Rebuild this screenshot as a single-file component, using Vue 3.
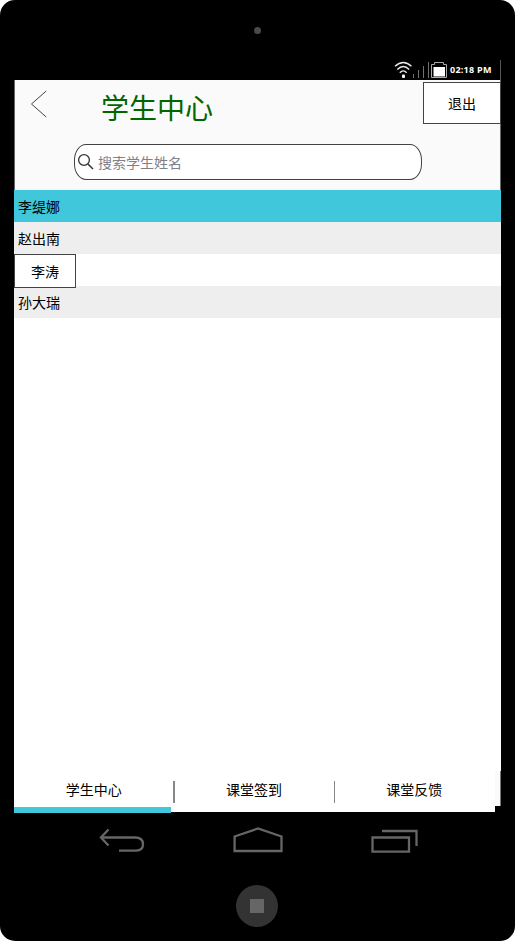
<script setup>
import { ref } from 'vue'

const students = [
  { name: '李缇娜', kind: 'active' },
  { name: '赵出南', kind: 'shaded' },
  { name: '李涛', kind: 'boxed' },
  { name: '孙大瑞', kind: 'shaded' },
]
const tabs = ['学生中心', '课堂签到', '课堂反馈']
const current = ref(0)
const keyword = ref('')
</script>

<template>
  <div class="phone">
    <div class="speaker"><span class="camera"></span></div>
    <div class="status">
      <svg class="signals" width="56" height="20" viewBox="0 0 56 20">
        <g fill="none" stroke="#e8e8e8" stroke-width="1.400">
          <path d="M1 6.300Q9.200 -1.500 17.500 6.300" />
          <path d="M3.300 9.600Q9.200 3.500 15.200 9.600" />
          <path d="M5.800 12.700Q9.200 9 12.700 12.700" />
        </g>
        <rect x="8" y="14.500" width="3" height="3.500" rx="1" fill="#fff" />
        <path d="M19.500 14v4M24.500 10v8M29.500 6v12M34.500 2v16" stroke="#707070" fill="none" />
        <path d="M37.500 17.500V4.500H40.500V2.500H49.500V4.500H52.500V17.500Z" stroke="#aaa" fill="#000" />
        <rect x="39.500" y="7" width="11.500" height="9.500" fill="#fff" />
      </svg>
      <span class="time">02:18 PM</span>
    </div>
    <main class="screen">
      <header class="header">
        <div class="title-row">
          <svg class="back" width="18" height="28" viewBox="0 0 18 28">
            <path d="M16.200 1L1.500 14L16.200 27" fill="none" stroke="#444" />
          </svg>
          <h1>学生中心</h1>
          <button class="exit">退出</button>
        </div>
        <label class="search">
          <svg width="18" height="18" viewBox="0 0 18 18" fill="none" stroke="#333" stroke-width="1.300">
            <circle cx="7" cy="7" r="5.400" />
            <path d="M11 11L16 16" stroke-width="1.500" />
          </svg>
          <input v-model="keyword" placeholder="搜索学生姓名" />
        </label>
      </header>
      <ul class="list">
        <li v-for="s in students" :key="s.name" :class="s.kind">
          <span>{{ s.name }}</span>
        </li>
      </ul>
      <footer class="footer">
        <nav class="tabs">
          <div v-for="(t, i) in tabs" :key="t" class="tab" :class="{ on: i === current }" @click="current = i">{{ t }}</div>
        </nav>
        <span class="edge"></span>
      </footer>
    </main>
    <div class="keys">
      <svg width="46" height="26" viewBox="0 0 46 26" fill="none" stroke="#666">
        <path d="M2 9.500H36Q44 9.500 44 16.200Q44 22.700 36 22.700H20" stroke-width="2.300" />
        <path d="M9.500 1.500L2 9.500L9.500 17.500" stroke-width="2.300" />
      </svg>
      <svg width="50" height="28" viewBox="0 0 50 28" fill="none" stroke="#666" stroke-width="2.300">
        <path d="M1.600 10.500L25 2.500L48.500 10.500V25H1.600Z" />
      </svg>
      <svg width="47" height="26" viewBox="0 0 47 26" fill="none" stroke="#666" stroke-width="2.300">
        <path d="M1.500 9.500H38V23.700H1.500ZM11 3H45.500V18" />
      </svg>
    </div>
    <div class="bottom"><span class="home"><i></i></span></div>
  </div>
</template>

<style>
body {
  margin: 0;
  background: #fff;
}
</style>

<style scoped>
.phone {
  box-sizing: border-box;
  width: 515px;
  height: 941px;
  padding: 0 14px;
  border-radius: 15px;
  background: #000;
  color: #000;
  font: 14px/20px "Noto Sans CJK SC", sans-serif;
  display: flex;
  flex-direction: column;
}
.speaker {
  height: 60px;
  display: flex;
  justify-content: center;
  align-items: center;
}
.camera {
  width: 7px;
  height: 7px;
  border-radius: 50%;
  background: #4a4a4a;
}
.status {
  box-sizing: border-box;
  height: 20px;
  width: 487px;
  padding-right: 7px;
  border-right: 1px solid #555;
  display: flex;
  justify-content: flex-end;
  align-items: center;
}
.time {
  color: #fff;
  font: bold 9px/20px "Open Sans", "Noto Sans", sans-serif;
  letter-spacing: 0.250px;
  width: 43px;
  white-space: nowrap;
}
.screen {
  width: 487px;
  height: 732px;
  background: #fff;
  display: flex;
  flex-direction: column;
}
.header {
  box-sizing: border-box;
  height: 110px;
  border: solid #666;
  border-width: 0 1px;
  background: #fafafa;
}
.title-row {
  display: flex;
  height: 64px;
  align-items: flex-start;
}
.back {
  margin: 10px 0 0 15px;
}
h1 {
  margin: 7px auto 0 53px;
  color: #060;
  font-size: 28px;
  line-height: 40px;
  font-weight: 400;
}
.exit {
  box-sizing: border-box;
  width: 78px;
  height: 42px;
  margin: 2px -1px 0 0;
  padding: 0;
  border: 1px solid #444;
  background: #fff;
  color: #000;
  font: inherit;
}
.search {
  box-sizing: border-box;
  display: flex;
  align-items: center;
  gap: 3px;
  width: 348px;
  height: 36px;
  margin-left: 59px;
  padding-left: 2px;
  border: 1px solid #444;
  border-radius: 12px / 16px;
  background: #fff;
}
.search input {
  width: 280px;
  padding: 0;
  border: 0;
  outline: 0;
  background: transparent;
  font: inherit;
}
.search input::placeholder {
  color: #80808a;
  opacity: 1;
}
.list {
  flex: 1;
  margin: 0;
  padding: 0;
  list-style: none;
}
.list li {
  box-sizing: border-box;
  height: 32px;
  padding: 6px 4px 0;
}
.list .active {
  background: #40c7dc;
}
.list .shaded {
  background: #eee;
}
.list .boxed {
  padding: 0;
}
.boxed span {
  position: relative;
  box-sizing: border-box;
  display: block;
  width: 62px;
  height: 34px;
  border: 1px solid #444;
  background: #fff;
  text-align: center;
  line-height: 32px;
}
.footer {
  display: flex;
  height: 41px;
  background: linear-gradient(90deg, #fff 481px, #000 481px);
}
.tabs {
  display: flex;
  width: 481px;
}
.tab {
  position: relative;
  box-sizing: border-box;
  flex: 1;
  padding: 8px 1px 0 0;
  text-align: center;
}
.tab + .tab::before {
  content: "";
  position: absolute;
  left: -1px;
  top: 10px;
  width: 1.500px;
  height: 22px;
  background: #888;
}
.tab.on::after {
  content: "";
  position: absolute;
  left: 0;
  top: 36px;
  width: 157px;
  height: 6px;
  background: #40c7dc;
}
.edge {
  box-sizing: border-box;
  width: 6px;
  height: 35px;
  border-right: 1px solid #777;
  background: #fafafa;
}
.keys {
  box-sizing: border-box;
  height: 58px;
  padding: 16px 83px 0 85px;
  display: flex;
  justify-content: space-between;
  align-items: flex-start;
}
.keys svg:nth-child(2) {
  margin: -2px 1px 0 0;
}
.bottom {
  display: flex;
  justify-content: center;
  padding: 15px 1px 0 0;
}
.home {
  width: 42px;
  height: 42px;
  border-radius: 50%;
  background: #333;
  display: flex;
  align-items: center;
  justify-content: center;
}
.home i {
  width: 14px;
  height: 14px;
  background: #666;
}
</style>
